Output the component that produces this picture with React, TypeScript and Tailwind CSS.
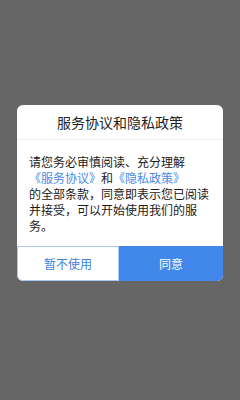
import React from "react";

export default function App() {
  return (
    <div
      className="w-[240px] h-[400px] bg-[#666666] flex flex-col items-center pt-[105px]"
      style={{ fontFamily: '"Noto Sans CJK SC", "Noto Sans", sans-serif' }}
    >
      <div className="w-[206px] bg-white rounded-[6px] overflow-hidden flex flex-col">
        <div className="h-[35px] flex items-center justify-center text-[14px] text-[#222] border-b border-[#ececec]">
          服务协议和隐私政策
        </div>
        <div className="pl-[12px] pr-[8px] pt-[14px] pb-[12px] text-[12px] leading-[16px] text-[#1a1a1a]">
          请您务必审慎阅读、充分理解
          <br />
          <span className="text-[#4a8ae6]">《服务协议》</span>和
          <span className="text-[#4a8ae6]">《隐私政策》</span>
          <br />
          的全部条款，同意即表示您已阅读并接受，可以开始使用我们的服务。
        </div>
        <div className="flex h-[35px]">
          <button className="w-[102px] flex items-center justify-center text-[12px] text-[#3f7fd8] border border-[#a9c6ee] rounded-bl-[6px] bg-white">
            暂不使用
          </button>
          <button className="flex-1 flex items-center justify-center text-[12px] text-white bg-[#4287ec]">
            同意
          </button>
        </div>
      </div>
    </div>
  );
}
